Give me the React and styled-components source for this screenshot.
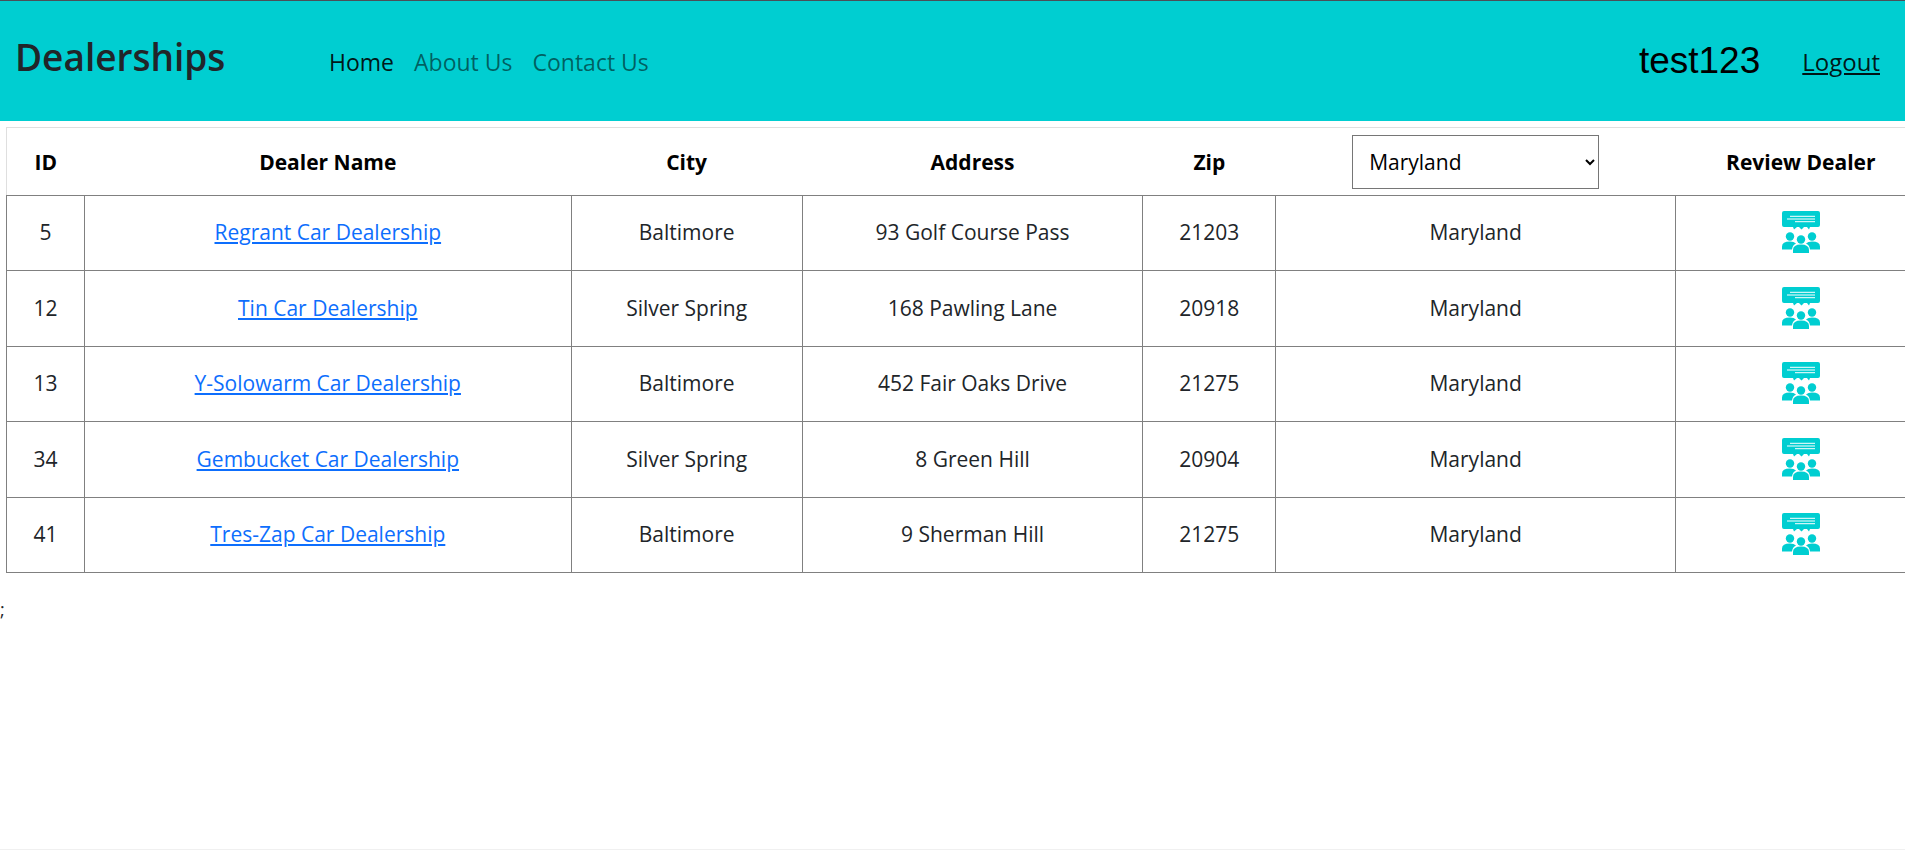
import React, { useState } from "react";
import styled, { createGlobalStyle } from "styled-components";

const GlobalStyle = createGlobalStyle`
  *, *::before, *::after { box-sizing: border-box; }
  body {
    margin: 0;
    font-family: "Open Sans", "Noto Sans", sans-serif;
    font-size: 18px;
    line-height: 24px;
    color: #212529;
    background: #fff;
  }
`;

const Page = styled.div`
  display: flex;
  flex-direction: column;
  min-height: 100vh;
  overflow: hidden;
  border-top: 1px solid #4a4f58;
  border-bottom: 1px solid #f0f0f0;
`;

const Navbar = styled.header`
  display: flex;
  align-items: center;
  height: 120px;
  padding: 0 25px 0 15px;
  background: #00ced1;
`;

const Brand = styled.h2`
  width: 304px;
  margin: 0;
  padding-bottom: 8px;
  font-size: 37px;
  font-weight: 600;
  line-height: 48px;
`;

const NavLinks = styled.nav`
  display: flex;
  flex: 1;
  gap: 20px;
  padding: 2px 10px 0;
`;

const NavLink = styled.a`
  font-size: 23px;
  line-height: 36px;
  text-decoration: none;
  color: ${(p) => (p.$active ? "rgba(0, 0, 0, 0.9)" : "rgba(0, 0, 0, 0.55)")};
`;

const Account = styled.div`
  display: flex;
  align-items: center;
  gap: 42px;
`;

const UserName = styled.span`
  font-family: "Liberation Sans", Arial, sans-serif;
  font-size: 37px;
  line-height: 44px;
  color: #000;
`;

const LogoutLink = styled.a`
  padding-top: 2px;
  font-size: 24px;
  line-height: 36px;
  color: rgba(0, 0, 0, 0.9);
  text-decoration-thickness: 2px;
  text-underline-offset: 2px;
`;

const TableArea = styled.main`
  padding: 6px 0 0 6px;
`;

const Table = styled.table`
  width: calc(100% + 22px);
  table-layout: fixed;
  border-collapse: collapse;
  border: 1px solid #dfdfdf;
  font-size: 21px;
  line-height: 36px;
  text-align: center;
`;

const Column = styled.col`
  width: ${(p) => p.$width};
`;

const HeadCell = styled.th`
  height: 68px;
  padding: 0;
  font-weight: 700;
  color: #000;
`;

const Row = styled.tr`
  height: 75px;
  &:nth-child(even) { height: 76px; }
`;

const Cell = styled.td`
  padding: 0 0 2px;
  border: 1px solid #808080;
`;

const DealerLink = styled.a`
  color: #0d6efd;
  text-decoration-thickness: 2px;
  text-underline-offset: 2px;
`;

const StateSelect = styled.select`
  display: block;
  width: 247px;
  height: 54px;
  margin: 0 auto;
  padding: 0 12px;
  border: 1px solid #767676;
  border-radius: 0;
  background: #fff;
  color: #000;
  font: inherit;
  font-weight: 400;
`;

const ReviewLink = styled.a`
  display: flex;
  justify-content: center;
  color: #00ced1;
`;

const Trailing = styled.div`
  padding-top: 24px;
`;

const columns = [
  { label: "ID", width: "4.06%" },
  { label: "Dealer Name", width: "25.35%" },
  { label: "City", width: "12.03%" },
  { label: "Address", width: "17.75%" },
  { label: "Zip", width: "6.92%" },
  { label: "State", width: "20.82%" },
  { label: "Review Dealer", width: "13.07%" },
];

const states = ["All States", "California", "Florida", "Maryland", "Texas", "Virginia"];

const dealers = [
  { id: 5, name: "Regrant Car Dealership", city: "Baltimore", address: "93 Golf Course Pass", zip: "21203", state: "Maryland" },
  { id: 12, name: "Tin Car Dealership", city: "Silver Spring", address: "168 Pawling Lane", zip: "20918", state: "Maryland" },
  { id: 13, name: "Y-Solowarm Car Dealership", city: "Baltimore", address: "452 Fair Oaks Drive", zip: "21275", state: "Maryland" },
  { id: 34, name: "Gembucket Car Dealership", city: "Silver Spring", address: "8 Green Hill", zip: "20904", state: "Maryland" },
  { id: 41, name: "Tres-Zap Car Dealership", city: "Baltimore", address: "9 Sherman Hill", zip: "21275", state: "Maryland" },
];

function ReviewIcon() {
  return (
    <svg width="38" height="42" viewBox="0 0 38 42" fill="currentColor" aria-hidden="true">
      <path d="M2 0h34q2 0 2 2v12q0 2-2 2h-8l-1 2.500-2-2.500h-3l-2.500 2.500-2.500-2.500h-2l-3 2.500-1-2.500H2q-2 0-2-2V2Q0 0 2 0Z" />
      <path d="M8 5.300h25M5 8h28M13 10.700h20" stroke="#fff" strokeWidth="1" />
      <circle cx="8" cy="25.500" r="4.200" />
      <circle cx="30" cy="25.500" r="4.200" />
      <path d="M0 38.500v-3q0-5 8-5 4 0 6 2-3.500 1.500-4 6Z" />
      <path d="M38 38.500v-3q0-5-8-5-4 0-6 2 3.500 1.500 4 6Z" />
      <circle cx="19" cy="28.500" r="4.200" />
      <path d="M11 42v-3q0-5.500 8-5.500t8 5.500v3Z" />
    </svg>
  );
}

export default function App() {
  const [state, setState] = useState("Maryland");

  return (
    <>
      <GlobalStyle />
      <Page>
        <Navbar>
          <Brand>Dealerships</Brand>
          <NavLinks>
            <NavLink href="#home" $active>Home</NavLink>
            <NavLink href="#about">About Us</NavLink>
            <NavLink href="#contact">Contact Us</NavLink>
          </NavLinks>
          <Account>
            <UserName>test123</UserName>
            <LogoutLink href="#logout">Logout</LogoutLink>
          </Account>
        </Navbar>
        <TableArea>
          <Table>
            <colgroup>
              {columns.map((c) => <Column key={c.label} $width={c.width} />)}
            </colgroup>
            <thead>
              <tr>
                {columns.map((c) => (
                  <HeadCell key={c.label} scope="col">
                    {c.label === "State" ? (
                      <StateSelect aria-label="State" value={state} onChange={(e) => setState(e.target.value)}>
                        {states.map((s) => <option key={s}>{s}</option>)}
                      </StateSelect>
                    ) : c.label}
                  </HeadCell>
                ))}
              </tr>
            </thead>
            <tbody>
              {dealers.map((d) => (
                <Row key={d.id}>
                  <Cell>{d.id}</Cell>
                  <Cell><DealerLink href={`#dealer-${d.id}`}>{d.name}</DealerLink></Cell>
                  <Cell>{d.city}</Cell>
                  <Cell>{d.address}</Cell>
                  <Cell>{d.zip}</Cell>
                  <Cell>{d.state}</Cell>
                  <Cell>
                    <ReviewLink href={`#review-${d.id}`} aria-label={`Review ${d.name}`}>
                      <ReviewIcon />
                    </ReviewLink>
                  </Cell>
                </Row>
              ))}
            </tbody>
          </Table>
        </TableArea>
        <Trailing>;</Trailing>
      </Page>
    </>
  );
}
